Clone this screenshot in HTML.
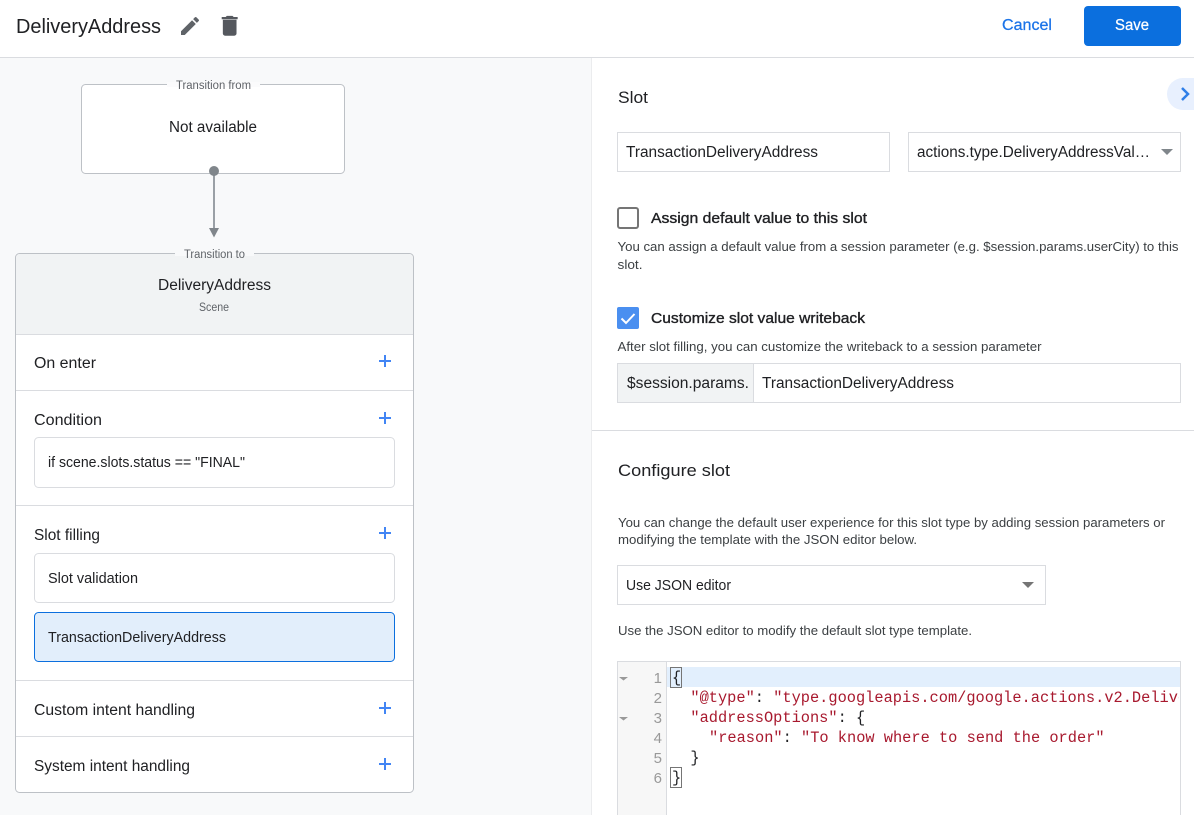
<!DOCTYPE html>
<html lang="en">
<head>
<meta charset="utf-8">
<title>DeliveryAddress</title>
<style>
html,body{margin:0;padding:0;background:#fff;width:1194px;height:815px;overflow:hidden}
svg{display:block}
text{font-family:"Liberation Sans",sans-serif;fill:#202124;font-size:15.5px}
.s11{font-size:11.5px;fill:#5f6368}
.s13{font-size:13.2px;fill:#3c4043}
.s14{font-size:15px;fill:#202124}
.b{font-size:15px;fill:#202124;stroke:#202124;stroke-width:.35px}
.m{font-family:"Liberation Mono",monospace;font-size:15.33px;fill:#202124;white-space:pre}
.r{fill:#a8192e}
.n{font-size:15px;fill:#999;text-anchor:end}
</style>
</head>
<body>
<svg width="1194" height="815" viewBox="0 0 1194 815" xmlns="http://www.w3.org/2000/svg">
<rect width="1194" height="815" fill="#fff"/>
<rect x="0" y="58" width="591" height="757" fill="#f8f9fa"/>
<rect x="0" y="57" width="1194" height="1" fill="#dadce0"/>
<rect x="591" y="58" width="1" height="757" fill="#ebecee"/>

<text x="16" y="33" style="font-size:20.5px" textLength="145" lengthAdjust="spacingAndGlyphs">DeliveryAddress</text>
<path transform="translate(178 14)" fill="#5f6368" d="M3 17.25V21h3.75L17.81 9.94l-3.75-3.75L3 17.25zM20.71 7.04c.39-.39.39-1.02 0-1.41l-2.34-2.34c-.39-.39-1.02-.39-1.41 0l-1.83 1.83 3.75 3.75 1.83-1.83z"/>
<path transform="translate(216 12.6) scale(1.14 1.1)" fill="#55585e" d="M6 19c0 1.1.9 2 2 2h8c1.100 0 2-.9 2-2V6.500H6v12.500zM19 4h-3.500l-1-1h-5l-1 1H5v2h14V4z"/>
<text x="1002" y="30" style="fill:#1a73e8;stroke:#1a73e8;stroke-width:.25px;font-size:15.5px" textLength="50" lengthAdjust="spacingAndGlyphs">Cancel</text>
<rect x="1084" y="6" width="97" height="40" rx="4" fill="#0b6fde"/>
<text x="1115" y="30" style="fill:#fff;stroke:#fff;stroke-width:.25px;font-size:15.5px" textLength="34" lengthAdjust="spacingAndGlyphs">Save</text>

<rect x="81.500" y="84.500" width="263" height="89" rx="4" fill="#fff" stroke="#bdc1c6"/>
<rect x="167" y="82" width="93" height="5" fill="#fbfbfc"/>
<text class="s11" x="176" y="89" textLength="75" lengthAdjust="spacingAndGlyphs">Transition from</text>
<text x="169" y="132" textLength="88" lengthAdjust="spacingAndGlyphs">Not available</text>
<rect x="213" y="171" width="2" height="59" fill="#9aa0a6"/>
<circle cx="214" cy="171" r="5" fill="#80868b"/>
<path d="M209 228h10l-5 9.500z" fill="#80868b"/>

<rect x="15.500" y="253.500" width="398" height="539" rx="4" fill="#fff" stroke="#bdc1c6"/>
<path d="M16 334V258a4 4 0 0 1 4-4H409a4 4 0 0 1 4 4V334z" fill="#f1f3f4"/>
<rect x="175" y="252" width="79" height="4" fill="#f8f9fa"/>
<text class="s11" x="184" y="258" textLength="61" lengthAdjust="spacingAndGlyphs">Transition to</text>
<text x="158" y="290" textLength="113" lengthAdjust="spacingAndGlyphs">DeliveryAddress</text>
<text class="s11" x="199" y="311" textLength="30" lengthAdjust="spacingAndGlyphs">Scene</text>
<rect x="16" y="334" width="397" height="1" fill="#dadce0"/>
<rect x="16" y="390" width="397" height="1" fill="#dadce0"/>
<rect x="16" y="505" width="397" height="1" fill="#dadce0"/>
<rect x="16" y="680" width="397" height="1" fill="#dadce0"/>
<rect x="16" y="736" width="397" height="1" fill="#dadce0"/>

<text x="34" y="368" textLength="62" lengthAdjust="spacingAndGlyphs">On enter</text>
<text x="34" y="425" textLength="68" lengthAdjust="spacingAndGlyphs">Condition</text>
<text x="34" y="540" textLength="66" lengthAdjust="spacingAndGlyphs">Slot filling</text>
<text x="34" y="715" textLength="161" lengthAdjust="spacingAndGlyphs">Custom intent handling</text>
<text x="34" y="771" textLength="156" lengthAdjust="spacingAndGlyphs">System intent handling</text>

<g fill="#4285f4">
<path d="M379 360h12v2h-12zM384 355h2v12h-2z"/>
<path d="M379 417h12v2h-12zM384 412h2v12h-2z"/>
<path d="M379 532h12v2h-12zM384 527h2v12h-2z"/>
<path d="M379 707h12v2h-12zM384 702h2v12h-2z"/>
<path d="M379 763h12v2h-12zM384 758h2v12h-2z"/>
</g>

<rect x="34.500" y="437.500" width="360" height="50" rx="4" fill="#fff" stroke="#dadce0"/>
<text class="s14" x="48" y="467" textLength="197" lengthAdjust="spacingAndGlyphs">if scene.slots.status == "FINAL"</text>
<rect x="34.500" y="553.500" width="360" height="49" rx="4" fill="#fff" stroke="#dadce0"/>
<text class="s14" x="48" y="583" textLength="90" lengthAdjust="spacingAndGlyphs">Slot validation</text>
<rect x="34.500" y="612.500" width="360" height="49" rx="4" fill="#e2eefb" stroke="#0b6fde"/>
<text class="s14" x="48" y="642" textLength="178" lengthAdjust="spacingAndGlyphs">TransactionDeliveryAddress</text>

<text x="618" y="103" style="font-size:17px" textLength="30" lengthAdjust="spacingAndGlyphs">Slot</text>
<path d="M1194 78h-11a16 16 0 0 0-16 16 16 16 0 0 0 16 16h11z" fill="#e8f0fe"/>
<path d="M1182 88l6 6-6 6" fill="none" stroke="#2f7fe8" stroke-width="2.500"/>

<rect x="617.500" y="132.500" width="272" height="39" fill="#fff" stroke="#dadce0"/>
<text class="s14" style="font-size:15.5px" x="626" y="157" textLength="192" lengthAdjust="spacingAndGlyphs">TransactionDeliveryAddress</text>
<rect x="908.500" y="132.500" width="272" height="39" fill="#fff" stroke="#dadce0"/>
<text class="s14" style="font-size:15.5px" x="917" y="157" textLength="233" lengthAdjust="spacingAndGlyphs">actions.type.DeliveryAddressVal…</text>
<path d="M1161 149h12l-6 6z" fill="#80868b"/>

<rect x="618" y="208" width="20" height="20" rx="2" fill="#fff" stroke="#757575" stroke-width="2"/>
<text class="b" x="651" y="223" textLength="216" lengthAdjust="spacingAndGlyphs">Assign default value to this slot</text>
<text class="s13" x="617.500" y="251" textLength="561" lengthAdjust="spacingAndGlyphs">You can assign a default value from a session parameter (e.g. $session.params.userCity) to this</text>
<text class="s13" x="617.500" y="269" textLength="25" lengthAdjust="spacingAndGlyphs">slot.</text>

<rect x="617" y="307" width="22" height="22" rx="2" fill="#4a8ff0"/>
<path d="M621.500 318.500l4.500 4.500 8.500-9" fill="none" stroke="#fff" stroke-width="2"/>
<text class="b" x="651" y="323" textLength="214" lengthAdjust="spacingAndGlyphs">Customize slot value writeback</text>
<text class="s13" x="617.500" y="351" textLength="424" lengthAdjust="spacingAndGlyphs">After slot filling, you can customize the writeback to a session parameter</text>

<rect x="617.500" y="363.500" width="563" height="39" fill="#fff" stroke="#dadce0"/>
<rect x="618" y="364" width="135" height="38" fill="#f1f3f4"/>
<rect x="753" y="364" width="1" height="38" fill="#dadce0"/>
<text class="s14" style="font-size:15.5px" x="627" y="388" textLength="122" lengthAdjust="spacingAndGlyphs">$session.params.</text>
<text class="s14" style="font-size:15.5px" x="762" y="388" textLength="192" lengthAdjust="spacingAndGlyphs">TransactionDeliveryAddress</text>

<rect x="592" y="430" width="602" height="1" fill="#dadce0"/>
<text x="618" y="476" style="font-size:17px" textLength="112" lengthAdjust="spacingAndGlyphs">Configure slot</text>
<text class="s13" x="618" y="527" textLength="547" lengthAdjust="spacingAndGlyphs">You can change the default user experience for this slot type by adding session parameters or</text>
<text class="s13" x="618" y="544" textLength="299" lengthAdjust="spacingAndGlyphs">modifying the template with the JSON editor below.</text>
<rect x="617.500" y="565.500" width="428" height="39" fill="#fff" stroke="#dadce0"/>
<text class="s14" x="626" y="590" textLength="105" lengthAdjust="spacingAndGlyphs">Use JSON editor</text>
<path d="M1022 582h12l-6 6z" fill="#757575"/>
<text class="s13" x="618" y="635" textLength="354" lengthAdjust="spacingAndGlyphs">Use the JSON editor to modify the default slot type template.</text>

<rect x="618" y="662" width="49" height="153" fill="#f7f7f7"/>
<rect x="617" y="661" width="564" height="1" fill="#dadce0"/>
<rect x="617" y="661" width="1" height="154" fill="#dadce0"/>
<rect x="1180" y="661" width="1" height="154" fill="#dadce0"/>
<rect x="666" y="662" width="1" height="153" fill="#dadce0"/>
<rect x="667" y="667" width="513" height="20" fill="#e2effd"/>
<path d="M619 677h9l-4.500 3.500zM619 717h9l-4.500 3.500z" fill="#999"/>
<text class="n" x="662" y="683">1</text>
<text class="n" x="662" y="703">2</text>
<text class="n" x="662" y="723">3</text>
<text class="n" x="662" y="743">4</text>
<text class="n" x="662" y="763">5</text>
<text class="n" x="662" y="783">6</text>
<rect x="670.500" y="667.500" width="11" height="20" fill="none" stroke="#757575"/>
<rect x="670.500" y="767.500" width="11" height="20" fill="none" stroke="#757575"/>
<svg x="667" y="662" width="512" height="153" viewBox="667 662 512 153">
<text class="m" x="672" y="682">{</text>
<text class="m" x="690.400" y="702"><tspan class="r">"@type"</tspan>: <tspan class="r">"type.googleapis.com/google.actions.v2.Delivery</tspan></text>
<text class="m" x="690.400" y="722"><tspan class="r">"addressOptions"</tspan>: {</text>
<text class="m" x="709" y="742"><tspan class="r">"reason"</tspan>: <tspan class="r">"To know where to send the order"</tspan></text>
<text class="m" x="690.400" y="762">}</text>
<text class="m" x="672" y="782">}</text>
</svg>
</svg>
</body>
</html>
